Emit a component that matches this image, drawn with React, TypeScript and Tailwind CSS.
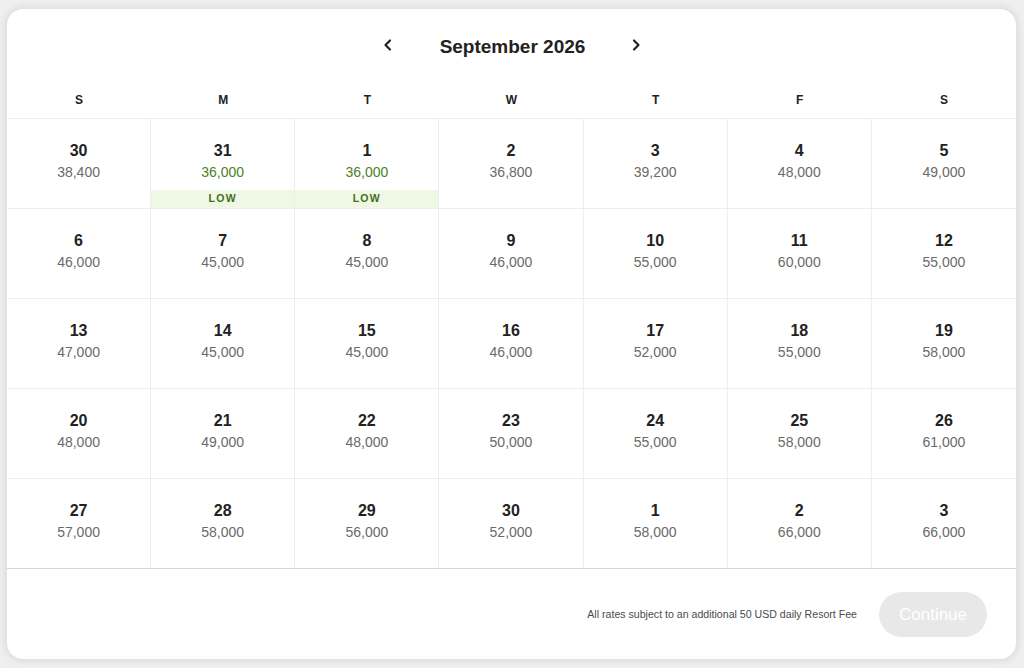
import React from "react";

type Day = { d: string; p: string; low?: boolean };

const rows: Day[][] = [
  [
    { d: "30", p: "38,400" },
    { d: "31", p: "36,000", low: true },
    { d: "1", p: "36,000", low: true },
    { d: "2", p: "36,800" },
    { d: "3", p: "39,200" },
    { d: "4", p: "48,000" },
    { d: "5", p: "49,000" },
  ],
  [
    { d: "6", p: "46,000" },
    { d: "7", p: "45,000" },
    { d: "8", p: "45,000" },
    { d: "9", p: "46,000" },
    { d: "10", p: "55,000" },
    { d: "11", p: "60,000" },
    { d: "12", p: "55,000" },
  ],
  [
    { d: "13", p: "47,000" },
    { d: "14", p: "45,000" },
    { d: "15", p: "45,000" },
    { d: "16", p: "46,000" },
    { d: "17", p: "52,000" },
    { d: "18", p: "55,000" },
    { d: "19", p: "58,000" },
  ],
  [
    { d: "20", p: "48,000" },
    { d: "21", p: "49,000" },
    { d: "22", p: "48,000" },
    { d: "23", p: "50,000" },
    { d: "24", p: "55,000" },
    { d: "25", p: "58,000" },
    { d: "26", p: "61,000" },
  ],
  [
    { d: "27", p: "57,000" },
    { d: "28", p: "58,000" },
    { d: "29", p: "56,000" },
    { d: "30", p: "52,000" },
    { d: "1", p: "58,000" },
    { d: "2", p: "66,000" },
    { d: "3", p: "66,000" },
  ],
];

const labels = ["S", "M", "T", "W", "T", "F", "S"];

function Chevron({ dir }: { dir: "l" | "r" }) {
  return (
    <svg width="12" height="14" viewBox="0 0 12 14" fill="none">
      <path
        d={dir === "l" ? "M8 2.5L3.5 7L8 11.5" : "M4 2.5L8.5 7L4 11.5"}
        stroke="#222"
        strokeWidth="2.2"
        strokeLinecap="round"
        strokeLinejoin="round"
      />
    </svg>
  );
}

export default function App() {
  return (
    <div
      className="w-[1024px] h-[668px] bg-[#efefef] pt-[9px] pl-[7px] overflow-hidden"
      style={{ fontFamily: '"Liberation Sans", Arial, sans-serif' }}
    >
      <div className="w-[1009px] h-[650px] bg-white rounded-[16px] overflow-hidden shadow-[0_0_6px_3px_rgba(0,0,0,0.07)] flex flex-col">
        <div className="h-[76px] flex items-center justify-center">
          <button className="w-[12px] flex items-center justify-center mr-[44px] mt-[-4px]">
            <Chevron dir="l" />
          </button>
          <div className="text-[19px] font-bold text-[#222] w-[150px] text-center">September 2026</div>
          <button className="w-[12px] flex items-center justify-center ml-[42px] mt-[-4px]">
            <Chevron dir="r" />
          </button>
        </div>
        <div className="grid grid-cols-7 h-[34px] border-b border-[#eeeeee]">
          {labels.map((l, i) => (
            <div key={i} className="text-center text-[12px] font-bold text-[#222] pt-[7px] leading-[16px]">
              {l}
            </div>
          ))}
        </div>
        <div className="flex flex-col">
          {rows.map((r, ri) => (
            <div
              key={ri}
              className={`grid grid-cols-7 h-[90px] ${ri === rows.length - 1 ? "border-b border-[#d8d8d8]" : "border-b border-[#eeeeee]"}`}
            >
              {r.map((c, ci) => (
                <div
                  key={ci}
                  className={`flex flex-col items-center ${ci < 6 ? "border-r border-[#eeeeee]" : ""}`}
                >
                  <div className="mt-[22px] text-[16px] leading-[20px] font-bold text-[#222]">{c.d}</div>
                  <div
                    className={`mt-[1px] text-[14px] leading-[20px] ${c.low ? "text-[#4c8223]" : "text-[#6a6a6a]"}`}
                  >
                    {c.p}
                  </div>
                  {c.low && (
                    <div className="mt-[8px] w-full h-[18px] bg-[#eef8e4] flex items-center justify-center text-[10.5px] font-bold tracking-[1.3px] text-[#3f6f1c]">
                      LOW
                    </div>
                  )}
                </div>
              ))}
            </div>
          ))}
        </div>
        <div className="flex-1 flex items-center justify-end pr-[29px] pt-[1px]">
          <div className="text-[10.6px] text-[#4a4a4a] mr-[22px]">
            All rates subject to an additional 50 USD daily Resort Fee
          </div>
          <button className="w-[108px] h-[45px] rounded-full bg-[#e8e8e8] text-white text-[17px]">
            Continue
          </button>
        </div>
      </div>
    </div>
  );
}
